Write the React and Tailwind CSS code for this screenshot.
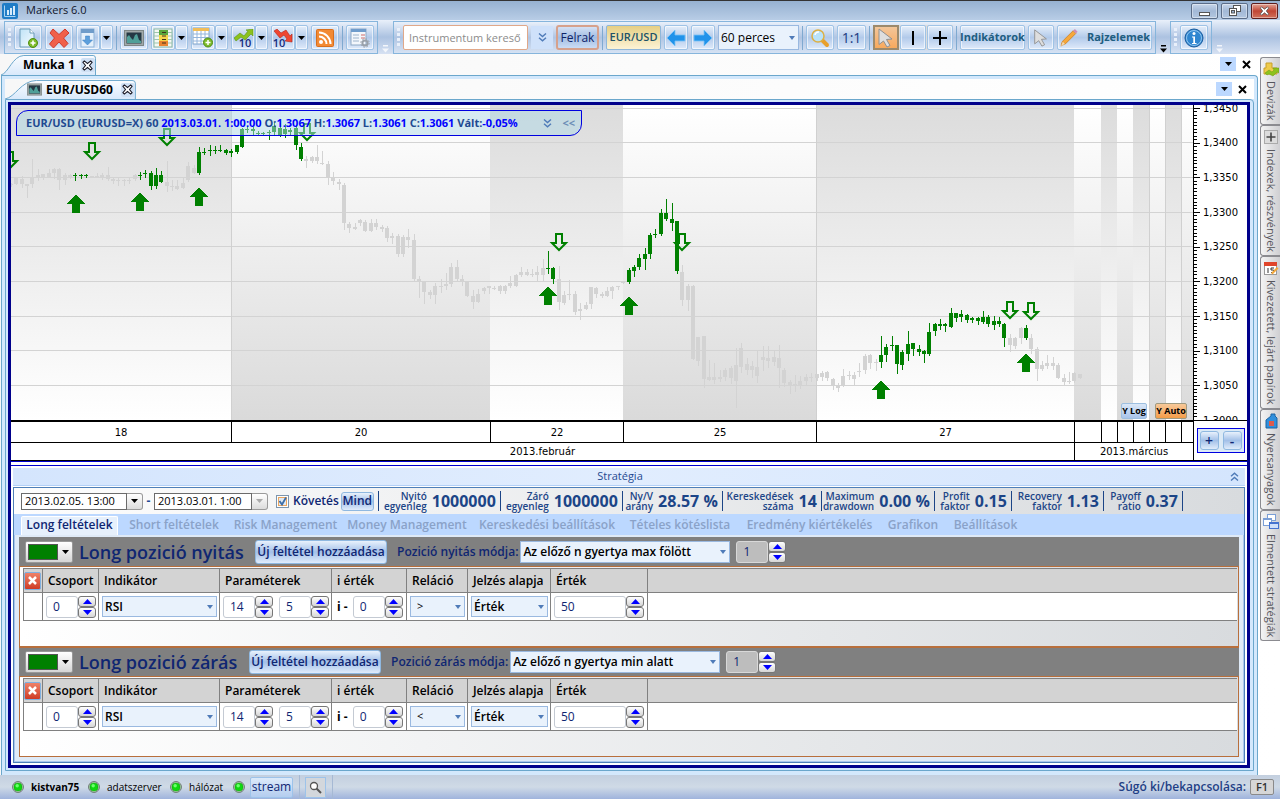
import React from "react";

/* ---------- chart data: [high, top, bottom, low] per hourly candle ---------- */
const CANDLES = [
  [183,184,185,186],[177,178,184,184],[176,179,184,187],[184,184,186,197],[159,178,184,187],[169,175,177,180],[174,174,177,179],[169,173,177,177],[168,169,173,178],[168,169,180,189],
  [173,175,180,184],[174,175,177,178],[173,175,176,180],[174,175,176,178],[174,175,176,177],[176,176,177,177],[173,176,177,177],[173,175,177,179],[167,175,179,180],[177,179,181,183],
  [177,180,181,185],[179,180,181,185],[178,180,181,183],[174,175,179,180],[172,175,176,179],[170,173,174,177],[171,173,186,189],[168,175,186,188],[171,175,182,182],[161,182,186,191],
  [180,186,187,190],[180,186,189,189],[178,183,188,188],[162,166,180,181],[165,168,173,173],[147,152,173,174],[148,152,153,154],[145,150,151,155],[146,150,151,153],[145,150,151,151],
  [149,150,153,154],[149,151,153,156],[145,145,152,153],[128,129,147,147],[126,129,130,132],[127,129,131,134],[131,133,134,135],[132,133,134,135],[130,132,133,139],[122,126,132,134],
  [123,128,135,136],[124,129,134,137],[128,130,132,134],[125,128,145,149],[143,147,159,160],[156,159,161,167],[156,157,161,162],[145,157,161,163],[151,163,164,164],[161,164,178,184],
  [172,178,181,184],[179,182,184,189],[183,185,223,229],[222,224,228,232],[223,227,229,229],[219,220,223,225],[220,222,231,231],[219,223,231,231],[219,223,227,229],[225,227,229,231],
  [226,228,238,241],[233,236,238,243],[234,236,254,256],[235,237,254,256],[229,237,240,247],[234,240,279,281],[276,279,282,297],[282,282,292,303],[290,292,295,298],[283,286,295,303],
  [279,286,287,292],[273,284,286,289],[263,267,284,286],[260,267,279,280],[275,279,282,285],[281,282,296,296],[290,296,302,308],[289,294,302,302],[287,288,291,293],[286,286,288,293],
  [286,288,289,289],[285,286,291,293],[285,286,291,293],[276,283,286,287],[274,275,286,286],[267,272,275,276],[269,272,275,275],[269,274,275,276],[266,272,275,281],[259,268,275,280],
  [251,268,269,273],[267,268,279,283],[266,279,302,309],[291,295,303,304],[280,294,295,299],[291,294,312,314],[303,309,311,319],[302,305,309,309],[287,287,304,308],[287,288,294,297],
  [292,294,296,297],[287,291,296,296],[286,287,291,298],[286,286,287,289],[281,282,283,283],[268,270,282,283],[265,267,271,276],[254,258,267,269],[248,254,259,269],[233,235,254,258],
  [229,234,235,237],[209,213,234,235],[199,213,219,220],[203,219,223,230],[221,221,271,273],[265,272,300,305],[284,286,300,310],[285,286,359,359],[337,337,361,365],[336,336,379,387],
  [360,377,380,380],[363,377,380,383],[370,377,379,381],[368,370,377,380],[366,368,378,383],[348,365,381,407],[343,348,367,372],[358,364,370,374],[361,366,370,377],[350,367,376,382],
  [346,357,360,370],[346,358,361,367],[350,357,362,365],[345,358,368,387],[368,370,383,386],[380,382,385,393],[375,384,386,391],[376,381,386,388],[374,377,381,385],[373,377,378,381],
  [374,374,378,380],[371,373,377,380],[371,372,378,380],[378,379,386,389],[383,386,388,391],[369,376,386,386],[371,375,376,379],[372,375,379,384],[363,371,372,376],[354,356,370,373],
  [354,355,363,368],[359,362,363,370],[336,355,362,367],[344,347,355,361],[336,345,346,350],[345,345,364,373],[350,352,365,369],[331,344,354,360],[343,343,349,355],[345,349,352,355],
  [350,351,354,362],[323,332,354,355],[323,324,331,335],[319,324,326,329],[323,324,326,331],[308,313,327,327],[313,313,318,321],[310,314,317,321],[314,315,320,322],[317,318,320,322],
  [317,318,321,324],[311,317,322,323],[315,317,324,326],[316,321,325,329],[317,321,324,326],[323,324,338,346],[334,338,345,351],[337,338,346,348],[327,328,338,343],[325,328,338,339],
  [334,338,349,353],[347,349,369,380],[361,365,369,370],[355,363,366,368],[357,363,366,369],[363,365,378,378],[374,378,382,384],[372,381,382,383],[372,373,381,382],[374,374,378,378],
];
const OPEN_RANGES = [[12,14],[24,28],[35,54],[100,101],[115,124],[162,185],[189,189]];
const inPosition = (i) => OPEN_RANGES.some(([a, b]) => i >= a && i <= b);
const ENTRIES = [[76,195],[140,193],[199,188],[548,287],[629,297],[881,381],[1026,354]];
const EXITS = [[10,151],[92,142],[167,128],[307,123],[559,233],[682,233],[1010,301],[1031,302]];
const BANDS = [[11,231,1],[231,490,0],[490,623,1],[623,816,0],[816,1074,1],[1074,1101,0],[1101,1117,1],[1117,1133,0],[1133,1149,1],[1149,1165,0],[1165,1181,1],[1181,1193,0]];
const PRICES = [["1,3450",108],["1,3400",142],["1,3350",177],["1,3300",212],["1,3250",246],["1,3200",281],["1,3150",316],["1,3100",350],["1,3050",385],["1,3000",420]];
const DAYS = ["18", "20", "22", "25", "27", "", "", "", "", "", "", ""];
const DAY_COLS = "grid-cols-[minmax(0,221fr)_minmax(0,259fr)_minmax(0,133fr)_minmax(0,193fr)_minmax(0,258fr)_minmax(0,27fr)_minmax(0,16fr)_minmax(0,16fr)_minmax(0,16fr)_minmax(0,16fr)_minmax(0,16fr)_minmax(0,11fr)]";

const UI = "font-['Open_Sans',sans-serif]";
const VERD = "font-['DejaVu_Sans',sans-serif]";
const GLASS = "bg-linear-to-b from-[#e6effa] via-[#b2caea] to-[#dfeafa]";

function Plot() {
  return (
    <svg className="block h-[315px] w-full" viewBox="11 105 1182 315" preserveAspectRatio="none" shapeRendering="crispEdges">
      <defs>
        <linearGradient id="down" x1="0" y1="0" x2="0" y2="1"><stop offset="0" stopColor="#dcdcdc" /><stop offset="1" stopColor="#ffffff" /></linearGradient>
        <linearGradient id="up" x1="0" y1="0" x2="0" y2="1"><stop offset="0" stopColor="#ffffff" /><stop offset="1" stopColor="#dadada" /></linearGradient>
      </defs>
      {BANDS.map(([a, b, d]) => <rect key={a} x={a} y="105" width={b - a} height="315" fill={d ? "url(#down)" : "url(#up)"} />)}
      {PRICES.slice(0, 9).map(([t, y]) => <rect key={t} x="11" y={y} width="1182" height="1" fill="#d3d3d3" />)}
      {[231, 816, 1149, 1165, 1181].map((x) => <rect key={x} x={x} y="105" width="1" height="315" fill="#d0d0d0" />)}
      {CANDLES.map(([hi, top, bot, lo], i) => {
        const x = Math.round(11 + 5.37 * i);
        return (
          <g key={i} fill={inPosition(i) ? "#008000" : "#d3d3d3"}>
            <rect x={x} y={hi} width="1" height={lo - hi + 1} />
            <rect x={x - 2} y={top} width="4" height={Math.max(1, bot - top)} />
          </g>
        );
      })}
      {ENTRIES.map(([x, y]) => <path key={x} fill="#008000" d={`M${x} ${y}l9 8v1h-5v9h-8v-9h-5v-1z`} />)}
      {EXITS.map(([x, y]) => <path key={x} shapeRendering="auto" fill="none" stroke="#008000" strokeWidth="2" d={`M${x - 3} ${y + 1}h6v9h4l-7 7l-7 -7h4z`} />)}
    </svg>
  );
}

function PriceAxis() {
  const ticks = Array.from({ length: 91 }, (_, i) => 108 + i * 3.465);
  return (
    <svg className="block h-[315px] w-[54px] shrink-0 bg-white" viewBox="1193 105 54 315">
      <rect x="1193" y="105" width="1" height="315" />
      <g shapeRendering="crispEdges">
        {ticks.map((y, i) => <rect key={i} x="1193" y={Math.round(y)} width={i % 10 ? 4 : 7} height="1" />)}
      </g>
      {PRICES.map(([t, y]) => <text key={t} x="1203" y={y + 4} fontSize="10" fontFamily="DejaVu Sans">{t}</text>)}
    </svg>
  );
}

/* ---------- toolbar ---------- */
const Drop = ({ c = "#000" }) => <svg width="7" height="4" viewBox="0 0 7 4"><path d="M0 0h7L3.5 4z" fill={c} /></svg>;
const Sep = () => <span className="h-6 w-px shrink-0 bg-[#7fa9d0]" />;
const Grip = () => (
  <svg width="3" height="20" viewBox="0 0 3 20" className="shrink-0"><path d="M1.5 0v20" stroke="#e9f0fa" strokeWidth="3" strokeDasharray="3 2" /></svg>
);
const ToolBtn = ({ label, w = "w-7", cls = "", children }) => (
  <button aria-label={label} className={`flex h-[25px] shrink-0 items-center justify-center rounded-[2px] border border-[#9fc3e6] shadow-[inset_0_0_0_1px_rgba(255,255,255,.6)] ${GLASS} ${w} ${cls}`}>{children}</button>
);
const Split = ({ label, children }) => (
  <span className="flex shrink-0">
    <ToolBtn label={label} w="w-6">{children}</ToolBtn>
    <ToolBtn label={`${label} menü`} w="w-[13px]"><Drop /></ToolBtn>
  </span>
);
const Bar = ({ children, cls = "" }) => (
  <div className={`flex h-[33px] shrink-0 items-center gap-[3px] border border-[#86b5dc] bg-linear-to-b from-[#e9f0fa] via-[#b0c5e3] to-[#d6e2f3] px-[3px] ${cls}`}><Grip />{children}</div>
);
const Overflow = ({ c = "#f3f6fb" }) => (
  <svg width="7" height="8" viewBox="0 0 7 8" className="mt-6 shrink-0"><path d="M1 0h5v1.5H1zM0 3.5h7L3.500 7.500z" fill={c} /></svg>
);

const PageNew = () => (
  <svg width="22" height="22" viewBox="0 0 22 22"><defs><linearGradient id="pg" x1="0" y1="0" x2="1" y2="1"><stop offset="0" stopColor="#bfe3f7" /><stop offset="1" stopColor="#f6fbff" /></linearGradient></defs>
    <path d="M3 2h10l4 4v14H3z" fill="url(#pg)" stroke="#6d9cb8" /><path d="M13 2v4h4" fill="#fff" stroke="#6d9cb8" /><circle cx="16" cy="16" r="4.500" fill="#7dbb2a" stroke="#4f8d13" /><path d="M16 13.500v5M13.500 16h5" stroke="#fff" strokeWidth="1.600" /></svg>
);
const RedX = () => (
  <svg width="22" height="22" viewBox="0 0 22 22"><path d="M5 2l6 5.500L17 2l4 4-5.500 5L20 16.500 16 20.500l-5-5.500-5.500 6L1.500 17 6.500 11 2 6z" fill="#f0604a" stroke="#cf3b2c" strokeWidth="1" /></svg>
);
const Download = () => (
  <svg width="18" height="20" viewBox="0 0 18 20"><rect x="2" y="1" width="13" height="18" fill="#e4f0fb" stroke="#8fb4d8" /><rect x="2" y="1" width="13" height="4" fill="#6f9cca" /><path d="M6.500 8h4v4h3l-5 5-5-5h3z" fill="#5b9fdc" stroke="#3a7dc0" strokeWidth=".5" /></svg>
);
const ChartIcon = ({ w = 20, h = 16 }) => (
  <svg width={w} height={h} viewBox="0 0 20 16"><rect x=".5" y=".5" width="19" height="15" fill="#a2aaaa" stroke="#7d8686" /><rect x="2.500" y="2.500" width="15" height="11" fill="#243844" /><path d="M3 13V7l2-2 2 3 2 2 2-5 2-1 2 6 2 1v2z" fill="#4f9f98" /></svg>
);
const LevelsIcon = () => (
  <svg width="20" height="20" viewBox="0 0 20 20"><rect x="1" y="1" width="18" height="18" fill="#f4f8f4" stroke="#8ab7a2" /><path d="M1 4.500h18M1 8h18M1 11.500h18M1 15h18" stroke="#9fc7ae" /><path d="M6 2h9v5H6z" fill="#58a63c" /><path d="M6 7h9v6H6z" fill="#f3d54a" /><path d="M6 13h9v5H6z" fill="#e98432" /><path d="M9 4.500h4M9 8h4M9 11.500h4M9 15h4" stroke="#40331a" /></svg>
);
const GridIcon = () => (
  <svg width="22" height="21" viewBox="0 0 22 21"><rect x="1" y="1" width="16" height="16" fill="#fff" stroke="#7da3cb" /><rect x="1" y="1" width="16" height="3" fill="#f1bd58" /><path d="M1 7h16M1 10.500h16M1 14h16M5 4v13M9 4v13M13 4v13" stroke="#94b5dc" /><circle cx="16" cy="15.500" r="4.500" fill="#7dbb2a" stroke="#4f8d13" /><path d="M16 13v5M13.500 15.500h5" stroke="#fff" strokeWidth="1.500" /></svg>
);
const TrendIcon = ({ up }) => (
  <span className="relative flex h-6 w-[22px] items-end justify-center pb-0.5">
    <svg className="absolute left-0.5 top-[3px]" width="20" height="14" viewBox="0 0 20 14">
      {up ? <path d="M0 9l6-5 4 3 4-5-2-1 7-1v7l-2-2-6 6-4-3-5 4z" fill="#8cc21d" stroke="#5d9312" strokeWidth=".6" /> : <path d="M0 2l3-2 4 4 5-3 4 6 2-2v8l-7-1 2-2-3-4-4 3z" fill="#ef4632" stroke="#b52317" strokeWidth=".6" />}
    </svg>
    <span className={`relative text-[11px] font-semibold leading-[11px] text-[#152a7c] ${up ? "pl-1" : "pr-2"}`}>10</span>
  </span>
);
const Rss = () => (
  <svg width="18" height="18" viewBox="0 0 18 18"><rect x=".5" y=".5" width="17" height="17" rx="1" fill="#f28a34" stroke="#d96f1c" /><circle cx="5" cy="13" r="2" fill="#fff" /><path d="M3 7.500a7.500 7.500 0 0 1 7.500 7.500M3 3.500A11.500 11.500 0 0 1 14.500 15" fill="none" stroke="#fff" strokeWidth="2" /></svg>
);
const SettingsDoc = () => (
  <svg width="20" height="20" viewBox="0 0 20 20"><rect x="1" y="1" width="15" height="16" fill="#f3f7fc" stroke="#8fa9c6" /><rect x="1" y="1" width="15" height="3" fill="#6f9ccc" /><path d="M3 7h6M3 10h6M3 13h6" stroke="#9eb4cc" /><path d="M11 7h4M11 10h4" stroke="#dc9a9a" strokeWidth="1.500" /><circle cx="15" cy="15" r="2.600" fill="none" stroke="#9aa1a9" strokeWidth="2" /><circle cx="15" cy="15" r="4.200" fill="none" stroke="#9aa1a9" strokeDasharray="1.600 1.700" /></svg>
);
const BlueArrow = ({ flip }) => (
  <svg width="20" height="18" viewBox="0 0 20 18" className={flip ? "rotate-180" : ""}><path d="M1 9l8-8v5h10v6H9v5z" fill="#2193ea" stroke="#7cc4f7" strokeWidth=".8" /></svg>
);
const Magnifier = () => (
  <svg width="20" height="20" viewBox="0 0 20 20"><path d="M12 12l5 5" stroke="#e8a02c" strokeWidth="4" strokeLinecap="round" /><circle cx="8" cy="8" r="6" fill="#b9e3fa" stroke="#ddb044" strokeWidth="1.500" /><path d="M5 7a3.500 3.500 0 0 1 4-3" stroke="#fff" strokeWidth="1.500" fill="none" /></svg>
);
const Cursor = ({ s = 20 }) => (
  <svg width={s} height={s} viewBox="0 0 20 20"><path d="M3 1l13 10-5.500 .5 3.500 6-3 1.500-3.500-6L3 16.500z" fill="#dedede" stroke="#909090" /></svg>
);
const Pencil = () => (
  <svg width="20" height="20" viewBox="0 0 22 22"><path d="M2.500 18l1.500-3.500L15.500 3l3 3L7 17.500z" fill="#f6a83b" stroke="#c8791d" strokeWidth=".8" /><path d="M15.500 3l2-2 3 3-2 2z" fill="#cf8fb5" /><path d="M2 20l2-5.500L7 17.500z" fill="#f5dcb4" stroke="#c8791d" strokeWidth=".4" /></svg>
);
const Info = () => (
  <svg width="20" height="20" viewBox="0 0 20 20"><circle cx="10" cy="10" r="9" fill="#2f86d0" stroke="#1c5d9e" /><circle cx="10" cy="10" r="7.500" fill="none" stroke="#a9d4f5" strokeWidth=".8" /><path d="M8 8.500h3V15h1.500v1H8v-1h1.300V9.500H8z" fill="#fff" /><circle cx="10" cy="5.500" r="1.500" fill="#fff" /></svg>
);
const Chevrons = ({ up }) => (
  <svg width="9" height="9" viewBox="0 0 9 9" className={up ? "rotate-180" : ""}><path d="M1 .5l3.500 3L8 .5M1 4.800l3.500 3L8 4.800" fill="none" stroke="#4f7bb8" strokeWidth="1.400" /></svg>
);
const CloseGlyph = () => (
  <svg width="11" height="11" viewBox="0 0 12 12"><path d="M2.500 1L6 3.800 9.500 1 11 2.500 8.200 6l2.800 3.500L9.500 11 6 8.200 2.500 11 1 9.500 3.800 6 1 2.500z" fill="#fff" stroke="#1a1a26" strokeWidth="1.200" /></svg>
);

function Toolbar() {
  return (
    <div className="flex h-[34px] items-start bg-linear-to-b from-[#e9f0fa] via-[#acc2e1] to-[#d6e1f2] pl-1 pt-px">
      <Bar>
        <ToolBtn label="Új"><PageNew /></ToolBtn>
        <ToolBtn label="Törlés"><RedX /></ToolBtn>
        <Split label="Mentés"><Download /></Split>
        <Sep />
        <ToolBtn label="Grafikon"><ChartIcon /></ToolBtn>
        <Split label="Szintek"><LevelsIcon /></Split>
        <Split label="Táblázat"><GridIcon /></Split>
        <Split label="Nyertesek"><TrendIcon up /></Split>
        <Split label="Vesztesek"><TrendIcon /></Split>
        <ToolBtn label="Hírek"><Rss /></ToolBtn>
        <Sep />
        <ToolBtn label="Beállítások"><SettingsDoc /></ToolBtn>
      </Bar>
      <span className="flex w-[15px] justify-center"><Overflow /></span>
      <Bar>
        <input aria-label="Instrumentum kereső" placeholder="Instrumentum kereső" className="h-[25px] w-[125px] rounded-[2px] border border-[#e0a889] bg-white px-[5px] text-[11px] placeholder:text-[#8c8c8c]" />
        <button aria-label="Lista" className="flex h-[23px] w-[22px] items-center justify-center bg-[#cfe1fa]"><Chevrons /></button>
        <button className="h-[25px] w-[43px] rounded-[3px] border-2 border-[#d6a18c] bg-linear-to-b from-[#d3e1f5] via-[#a3bde2] to-[#cadcf4] text-xs text-[#0e2469]">Felrak</button>
        <Sep />
        <button className="h-[25px] w-[55px] rounded-[2px] border border-[#8fb7da] bg-linear-to-b from-[#e6cf83] to-[#fcf3d5] text-[11px] font-semibold text-[#205267]">EUR/USD</button>
        <ToolBtn label="Vissza" w="w-6"><BlueArrow /></ToolBtn>
        <ToolBtn label="Előre" w="w-6"><BlueArrow flip /></ToolBtn>
        <Select label="Időtáv" value="60 perces" cls="h-[25px] w-[81px] text-xs" />
        <Sep />
        <ToolBtn label="Nagyítás"><Magnifier /></ToolBtn>
        <ToolBtn label="1:1 méret" w="w-[29px]" cls="text-sm text-[#1c3a80]">1:1</ToolBtn>
        <Sep />
        <span className="flex gap-px bg-[#dcdcdc]">
          <button aria-label="Kijelölés" className="flex h-[25px] w-[26px] items-center justify-center border-2 border-[#9c8a6d] bg-linear-to-b from-[#f3c69a] to-[#f8a95c]"><Cursor /></button>
          <ToolBtn label="Vonal" w="w-[26px]"><svg width="14" height="14"><path d="M7 0v14" stroke="#000" strokeWidth="2" /></svg></ToolBtn>
          <ToolBtn label="Szálkereszt" w="w-[26px]"><svg width="14" height="14"><path d="M7 0v14M0 7h14" stroke="#000" strokeWidth="2" /></svg></ToolBtn>
        </span>
        <Sep />
        <ToolBtn label="Indikátorok" w="w-[65px]" cls="text-[11px] font-bold text-[#205d80]">Indikátorok</ToolBtn>
        <ToolBtn label="Mutató" w="w-[26px]"><Cursor s={18} /></ToolBtn>
        <ToolBtn label="Rajzelemek" w="w-[95px]" cls="gap-2 text-[11px] font-bold text-[#205d80]"><Pencil />Rajzelemek</ToolBtn>
      </Bar>
      <span className="flex w-[14px] justify-center"><Overflow c="#000" /></span>
      <Bar><ToolBtn label="Információ"><Info /></ToolBtn></Bar>
      <span className="flex w-[14px] justify-center"><Overflow /></span>
    </div>
  );
}

const WinBtn = ({ label, tone, children }) => (
  <button aria-label={label} className={`flex h-4 w-[27px] items-center justify-center rounded-[2px] border shadow-[inset_0_0_0_1px_rgba(255,255,255,.4)] ${tone}`}>{children}</button>
);

function TitleBar() {
  const plain = "border-[#5b6d88] bg-linear-to-b from-[#c6d5e9] via-[#a3b9d6] to-[#b3c7e0]";
  return (
    <header className="flex h-5 items-center border-t border-[#333] bg-linear-to-b from-[#96b1d1] to-[#b8cde6] pl-0.5">
      <svg width="16" height="16" viewBox="0 0 16 16"><rect width="16" height="16" rx="2" fill="#1f7cc6" /><path d="M2.500 2.500v11h11" stroke="#a9d4f5" fill="none" /><path d="M5 7h2v5H5zM8 5h2v7H8zM11 3h2v9h-2z" fill="#d6ebfb" /></svg>
      <h1 className="ml-2 flex-1 text-[11px] text-[#10152a]">Markers 6.0</h1>
      <div className="flex items-center gap-[3px] pr-0.5">
        <WinBtn label="Kis méret" tone={plain}><svg width="11" height="12"><rect x=".5" y="7.500" width="10" height="3" fill="#fff" stroke="#555" /></svg></WinBtn>
        <WinBtn label="Visszaállítás" tone={plain}><svg width="12" height="11" viewBox="0 0 12 11"><rect x="4.500" y=".5" width="7" height="6" fill="#fff" stroke="#555" /><rect x=".5" y="3.500" width="7" height="7" fill="#fff" stroke="#555" /><rect x="2.500" y="5.500" width="3" height="2.500" fill="#9cb3d1" stroke="#555" /></svg></WinBtn>
        <WinBtn label="Bezárás" tone="border-[#5d1d1d] bg-linear-to-b from-[#e0a396] via-[#c04434] to-[#d0705c]"><svg width="11" height="10" viewBox="0 0 12 12"><path d="M2.500 1L6 3.800 9.500 1 11 2.500 8.200 6l2.800 3.500L9.500 11 6 8.200 2.500 11 1 9.500 3.800 6 1 2.500z" fill="#fff" stroke="#555" /></svg></WinBtn>
      </div>
    </header>
  );
}

/* ---------- form controls ---------- */
const Select = ({ label, value, cls, text = "pl-0.5" }) => (
  <span className={`relative inline-block shrink-0 ${cls}`}>
    <select aria-label={label} defaultValue={value} className={`size-full appearance-none border border-[#9ab9e0] bg-[#e9f2fc] text-black ${text}`}><option>{value}</option></select>
    <span className="pointer-events-none absolute inset-y-0 right-1 flex items-center"><svg width="6" height="4" viewBox="0 0 6 4"><path d="M0 0h6L3 4z" fill="#4f7bb8" /></svg></span>
  </span>
);
const Spin = ({ label, value, w, gray }) => (
  <span className="flex h-[22px] shrink-0 items-stretch font-normal">
    <input aria-label={label} defaultValue={value} className={`rounded-[3px] border pl-[6px] text-xs text-[#0f2672] ${gray ? "border-[#d8d8d8] bg-[#bdbdbd]" : "border-[#c4cad3] bg-white"} ${w}`} />
    <span className="flex w-[18px] flex-col">
      <button aria-label={`${label} növelés`} className="flex h-[11px] items-center justify-center rounded-[3px] border border-[#777] bg-linear-to-b from-white to-[#d5d5d5]"><svg width="9" height="5"><path d="M0 5L4.500 0 9 5z" fill="#0000ff" /></svg></button>
      <button aria-label={`${label} csökkentés`} className="flex h-[11px] items-center justify-center rounded-[3px] border border-[#777] bg-linear-to-b from-white to-[#d5d5d5]"><svg width="9" height="5"><path d="M0 0h9L4.500 5z" fill="#0000ff" /></svg></button>
    </span>
  </span>
);
const DateBox = ({ label, value, w, off }) => (
  <span className="flex h-[17px]">
    <input aria-label={label} defaultValue={value} className={`border border-[#6b6b6b] bg-white pl-[3px] text-[11px] text-black ${w}`} />
    <button aria-label={`${label} választó`} className="flex w-4 items-center justify-center rounded-r-[3px] border border-l-0 border-[#9a9a9a] bg-linear-to-b from-white to-[#dcdcdc]"><Drop c={off ? "#aaa" : "#000"} /></button>
  </span>
);
const TextBtn = ({ children, cls = "" }) => (
  <button className={`rounded-[3px] border border-[#8fb8e0] bg-linear-to-b from-[#e8f1fc] via-[#a3c0e8] to-[#e0ecfb] font-semibold text-[#0f2672] ${cls}`}>{children}</button>
);

/* ---------- strategy ---------- */
const STATS = [
  ["Nyitó", "egyenleg", "1000000", "w-[122px]"], ["Záró", "egyenleg", "1000000", "w-[122px]"], ["Ny/V", "arány", "28.57 %", "w-[100px]"], ["Kereskedések", "száma", "14", "w-[99px]"],
  ["Maximum", "drawdown", "0.00 %", "w-[113px]"], ["Profit", "faktor", "0.15", "w-[77px]"], ["Recovery", "faktor", "1.13", "w-[92px]"], ["Payoff", "ratio", "0.37", "w-[79px]"],
];
const TABS = [["Long feltételek", "w-[97px]"], ["Short feltételek", "w-[112px]"], ["Risk Management", "w-[111px]"], ["Money Management", "w-[132px]"], ["Kereskedési beállítások", "w-[148px]"], ["Tételes kötéslista", "w-[118px]"], ["Eredmény kiértékelés", "w-[141px]"], ["Grafikon", "w-[66px]"], ["Beállítások", "w-[79px]"]];

function Group({ title, modeLabel, mode, rel, gap }) {
  const td = "border border-[#808080]";
  const th = `${td} pl-[5px] text-left text-xs font-semibold whitespace-nowrap`;
  return (
    <section className="border-t border-[#b86f3c] bg-[#808080] first:border-[#808080]">
      <div className="flex h-7 items-center pl-[6px]">
        <button aria-label="Szín" className="flex h-[22px] w-[48px] items-center gap-1 rounded-[2px] border border-[#999] bg-linear-to-b from-white to-[#d5d5d5] pl-[2px]"><span className="h-4 w-[30px] border border-[#555] bg-[#008000]" /><Drop /></button>
        <h2 className={`ml-1.5 shrink-0 text-[18px] font-semibold leading-7 text-[#0f2672] ${gap}`}>{title}</h2>
        <TextBtn cls="h-6 w-[132px] whitespace-nowrap text-xs">Új feltétel hozzáadása</TextBtn>
        <span className="ml-2.5 whitespace-nowrap text-xs font-semibold text-[#0f2672]">{modeLabel}</span>
        <Select label={modeLabel} value={mode} cls="ml-0.5 h-[22px] w-[210px] text-xs" text="pl-0.5 font-semibold" />
        <span className="ml-1.5"><Spin label="Gyertyák száma" value="1" w="w-8" gray /></span>
      </div>
      <div className="h-[81px] border border-[#b86f3c] bg-linear-to-r from-white to-[#d8dbde] pl-[3px] pr-px pt-px">
        <table className="w-full table-fixed border-collapse bg-white">
          <colgroup><col className="w-[19px]" /><col className="w-[56px]" /><col className="w-[121px]" /><col className="w-[112px]" /><col className="w-[75px]" /><col className="w-[61px]" /><col className="w-[83px]" /><col className="w-[97px]" /><col /></colgroup>
          <thead><tr className="h-6 bg-[#d3d3d3]">
            <th className="border border-[#808080] p-0"><button aria-label="Összes törlése" className="flex h-[18px] w-[17px] items-center justify-center rounded-[2px] border border-[#7fb0e0] bg-linear-to-b from-[#ee8168] to-[#cf3a24]"><svg width="9" height="9"><path d="M1 1l7 7M8 1L1 8" stroke="#fff" strokeWidth="2.500" /></svg></button></th>
            <th className={th}>Csoport</th><th className={th}>Indikátor</th><th className={th}>Paraméterek</th><th className={th}>i érték</th><th className={th}>Reláció</th><th className={th}>Jelzés alapja</th><th className={th}>Érték</th><th className={`${th} border-r-0`}></th>
          </tr></thead>
          <tbody><tr className="h-7">
            <td className={td}></td>
            <td className={td}><span className="flex pl-[3px]"><Spin label="Csoport" value="0" w="w-8" /></span></td>
            <td className={td}><span className="flex pl-[3px]"><Select label="Indikátor" value="RSI" cls="h-[21px] w-[115px] text-xs" text="pl-0.5 font-semibold" /></span></td>
            <td className={td}><span className="flex gap-[6px] pl-[3px]"><Spin label="Első paraméter" value="14" w="w-8" /><Spin label="Második paraméter" value="5" w="w-8" /></span></td>
            <td className={td}><span className="flex items-center gap-[5px] pl-[5px] text-xs font-bold">i -<Spin label="i érték" value="0" w="w-8" /></span></td>
            <td className={td}><span className="flex pl-[3px]"><Select label="Reláció" value={rel} cls="h-[21px] w-[55px] text-[11px]" text="pl-[6px]" /></span></td>
            <td className={td}><span className="flex pl-[3px]"><Select label="Jelzés alapja" value="Érték" cls="h-[21px] w-[77px] text-xs" text="pl-0.5 font-semibold" /></span></td>
            <td className={td}><span className="flex pl-[3px]"><Spin label="Érték" value="50" w="w-[72px]" /></span></td>
            <td className={`${td} border-r-0`}></td>
          </tr></tbody>
        </table>
      </div>
    </section>
  );
}

function Strategy() {
  return (
    <section className="flex flex-1 flex-col bg-white px-0.5 pb-0.5">
      <div className="-mx-0.5 mb-0.5 h-[5px] border-y border-[#0000ce]" />
      <div className="relative flex h-[18px] items-center justify-center border-b border-[#b2d0f8] bg-linear-to-r from-[#d4e5fd] via-[#e1edfe] to-[#d4e5fd] pr-[18px] text-[11px] text-[#1f4a91]">
        Stratégia
        <button aria-label="Összecsukás" className="absolute right-1.5"><Chevrons up /></button>
      </div>
      <div className="mt-px flex flex-1 flex-col border border-[#4e7fb8] bg-linear-to-r from-[#fdfdfd] to-[#d8dbde]">
        <div className="flex h-[26px] items-center pl-[7px]">
          <DateBox label="Kezdet" value="2013.02.05. 13:00" w="w-[106px]" />
          <span className="w-[11px] text-center text-xs font-bold text-[#1f4a91]">-</span>
          <DateBox label="Vég" value="2013.03.01. 1:00" w="w-[98px]" off />
          <label className="ml-2 flex items-center gap-1 text-xs font-semibold text-[#0f2672]">
            <input type="checkbox" defaultChecked className="peer sr-only" />
            <svg width="13" height="13" viewBox="0 0 13 13"><rect x=".5" y=".5" width="12" height="12" fill="#fff" stroke="#7d95ad" /><rect x="2.500" y="2.500" width="8" height="8" fill="#dfe9f3" stroke="#eba55e" /><path d="M3.500 6l2.500 3.500L10 2.500" fill="none" stroke="#3e6ea8" strokeWidth="1.800" /></svg>
            Követés
          </label>
          <TextBtn cls="ml-0.5 h-[19px] w-[33px] text-xs">Mind</TextBtn>
          <span className="ml-1 h-5 w-px bg-[#1c4587]" />
          {STATS.map(([a, b, v, w]) => (
            <div key={a} className={`flex h-5 shrink-0 items-center justify-end gap-[5px] whitespace-nowrap border-r border-[#1c4587] pr-1 text-[#1c4587] ${w}`}>
              <span className="flex flex-col text-right text-[10px] font-semibold leading-[10px]"><span>{a}</span><span>{b}</span></span>
              <span className="text-base font-bold leading-5">{v}</span>
            </div>
          ))}
        </div>
        <nav className="flex h-[21px] items-end bg-[#bcd8ff] pl-[7px]">
          {TABS.map(([t, w], i) => (
            <button key={t} className={`h-[19px] shrink-0 whitespace-nowrap pb-0.5 text-center text-xs font-semibold leading-4 ${w} ${i === 0 ? "rounded-t-[2px] border border-b-0 border-white bg-[#e6f0fc] text-[#0f2672]" : "text-[#8aa2c8]"}`}>{t}</button>
          ))}
        </nav>
        <div className="flex-1 border-x border-b border-[#a9c6ec] bg-[#dfeaf7] px-1 pb-[3px] pt-[2px]">
          <Group title="Long pozició nyitás" modeLabel="Pozició nyitás módja:" mode="Az előző n gyertya max fölött" rel=">" gap="w-[176px]" />
          <Group title="Long pozició zárás" modeLabel="Pozició zárás módja:" mode="Az előző n gyertya min alatt" rel="<" gap="w-[170px]" />
        </div>
      </div>
    </section>
  );
}

function ChartPanel() {
  return (
    <section className="shrink-0 border-b border-black bg-white">
      <div className="flex">
        <div className="relative min-w-0 flex-1">
          <Plot />
          <div className="absolute left-[5px] top-[5px] flex h-[26px] w-[566px] items-center rounded-tl-xl rounded-br-xl border border-[#0000e0] bg-[#add8e6]/50 pl-[9px]">
            <p className="whitespace-nowrap text-[11px] font-bold text-[#0000ff]">
              <span className="text-[#1f4a91]">EUR/USD (EURUSD=X) 60</span> 2013.03.01. 1:00:00 <span className="text-[#1f4a91]">O:</span>1.3067 <span className="text-[#1f4a91]">H:</span>1.3067 <span className="text-[#1f4a91]">L:</span>1.3061 <span className="text-[#1f4a91]">C:</span>1.3061 <span className="text-[#1f4a91]">Vált:</span>-0,05%
            </p>
            <button aria-label="Részletek" className="ml-auto"><Chevrons /></button>
            <button aria-label="Bezár" className="ml-2.5 mr-1.5 text-[11px] font-bold text-[#6a8cb5]">&lt;&lt;</button>
          </div>
          <div className="absolute bottom-px right-[6px] flex gap-2 text-[9px] font-bold leading-[14px] text-black">
            <button className="h-4 w-[26px] whitespace-nowrap rounded-[2px] border border-[#9dbfe0] bg-linear-to-b from-[#dbe8f8] to-[#a8c4ea]">Y Log</button>
            <button className="h-4 w-8 whitespace-nowrap rounded-[2px] border border-[#a09a80] bg-linear-to-b from-[#f7c999] to-[#f49c46]">Y Auto</button>
          </div>
        </div>
        <PriceAxis />
      </div>
      <div className="flex border-t border-black">
        <div className={`min-w-0 flex-1 border-r border-t border-black text-[10px] text-black ${VERD}`}>
          <div className={`grid h-[21px] border-b border-black ${DAY_COLS}`}>
            {DAYS.map((t, i) => <span key={i} className="flex items-center justify-center border-r border-black last:border-r-0">{t}</span>)}
          </div>
          <div className="grid h-[17px] grid-cols-[minmax(0,1064fr)_minmax(0,118fr)]">
            <span className="flex items-center justify-center border-r border-black">2013.február</span>
            <span className="flex items-center justify-center">2013.március</span>
          </div>
        </div>
        <div className="flex w-[53px] items-center justify-center">
          <div className="flex h-[25px] w-12 items-center justify-center gap-1 border border-[#0000e0] bg-[#dceaf6]">
            <TextBtn cls="flex h-[19px] w-[19px] items-center justify-center text-sm">+</TextBtn>
            <TextBtn cls="flex h-[19px] w-[19px] items-center justify-center text-sm">-</TextBtn>
          </div>
        </div>
      </div>
    </section>
  );
}

const TabShape = () => (
  <svg className="absolute inset-0 size-full" viewBox="0 0 100 21" preserveAspectRatio="none">
    <defs><linearGradient id="tab" x1="0" y1="0" x2="0" y2="1"><stop offset="0" stopColor="#fafcff" /><stop offset="1" stopColor="#d9e9fb" /></linearGradient></defs>
    <path d="M0 21C8 19 12 1 24 .5H97q2.500 0 2.500 3V21" fill="url(#tab)" stroke="#6ba7cc" vectorEffect="non-scaling-stroke" />
  </svg>
);
const StripEnd = () => (
  <span className="ml-auto flex items-center gap-1.5 self-start pt-[3px]">
    <button aria-label="Lista" className="flex h-[14px] w-4 items-center justify-center bg-[#bcd8ff]"><Drop /></button>
    <button aria-label="Bezárás"><svg width="9" height="9" viewBox="0 0 9 9"><path d="M1 1l7 7M8 1L1 8" stroke="#000" strokeWidth="2" /></svg></button>
  </span>
);

/* ---------- side tabs ---------- */
const SIDE = [
  ["Devizák", "h-[68px]", <svg width="16" height="16" viewBox="0 0 16 16"><path d="M3 2h6v5h5v6H1V7h2z" fill="#efcb4b" stroke="#c79f2c" /><path d="M2 12l4-3 3 2 2-2-1-2h6v5l-2-1-4 4-4-2-2 1z" fill="#8cc21d" stroke="#679b10" strokeWidth=".5" /></svg>],
  ["Indexek, részvények", "h-[131px]", <svg width="14" height="14" viewBox="0 0 14 14"><rect x=".5" y=".5" width="13" height="13" fill="#dcdcdc" stroke="#aaa" /><path d="M7 2.500v9M2.500 7h9" stroke="#444" strokeWidth="1.600" /></svg>],
  ["Kivezetett, lejárt papírok", "h-[153px]", <svg width="16" height="16" viewBox="0 0 16 16"><rect x="1.500" y="2.500" width="12" height="12" fill="#fff" stroke="#999" /><rect x="1" y="2" width="13" height="4" fill="#e0452b" /><path d="M5 8v5M8 8h3M8 8v2h2.500v2.500H8" stroke="#333" fill="none" /><path d="M8 13l6-6 1.500 1.500-6 6z" fill="#f3a83c" /></svg>],
  ["Nyersanyagok", "h-[101px]", <svg width="14" height="16" viewBox="0 0 14 16"><path d="M7 1h4v2l2 2v10H2V7l5-4z" fill="#2f8fdc" stroke="#1c65a3" /><rect x="5" y="8" width="5" height="5" fill="#dc5b4d" /></svg>],
  ["Elmentett stratégiák", "h-[131px]", <svg width="16" height="16" viewBox="0 0 16 16"><rect x="4.500" y=".5" width="8" height="6" fill="#fff" stroke="#7b9fd6" /><rect x=".5" y="4.500" width="8" height="7" fill="#fff" stroke="#7b9fd6" /><path d="M0 5h9" stroke="#7b9fd6" strokeWidth="2" /><rect x="6.500" y="8.500" width="9" height="6" fill="#cfe0fb" stroke="#4472d0" /><path d="M6 9h10" stroke="#4472d0" strokeWidth="2" /></svg>],
];

const Led = () => (
  <svg width="12" height="12" viewBox="0 0 12 12" className="shrink-0"><circle cx="6" cy="6" r="5.400" fill="#e9efe9" stroke="#56655a" strokeWidth=".9" /><circle cx="6" cy="6" r="4.100" fill="#0fd80f" stroke="#0a8a0a" strokeWidth=".6" /><circle cx="5.200" cy="4.800" r="1.700" fill="#6dff6d" /></svg>
);

export default function App() {
  return (
    <div className={`flex min-h-screen flex-col bg-white ${UI}`}>
      <TitleBar />
      <Toolbar />
      <main className="flex flex-1 bg-linear-to-r from-[#f7f7f7] to-white">
        <div className="ml-px flex min-w-0 flex-1 flex-col">
          <div className="flex h-[21px] pr-[7px]">
            <button className="relative mt-px flex w-[95px] items-center text-xs font-bold text-black"><TabShape /><span className="relative flex items-center whitespace-nowrap pl-[22px]">Munka 1<span className="ml-1.5 flex size-[14px] items-center justify-center rounded-[2px] bg-[#cfe0f4]"><CloseGlyph /></span></span></button>
            <StripEnd />
          </div>
          <div className="flex flex-1 flex-col rounded-tr-[4px] border-x border-t border-[#6ba7cc] bg-[#d3e8fc] p-[3px] pb-1">
            <div className="flex h-5 bg-linear-to-r from-[#f7f7f7] to-white pr-[7px]">
              <button className="relative mt-px flex w-[131px] items-center text-xs font-bold text-black"><TabShape /><span className="relative flex items-center gap-1 whitespace-nowrap pl-[22px]"><ChartIcon w={15} h={13} />EUR/USD60<span className="ml-1 flex size-[14px] items-center justify-center rounded-[2px] bg-[#cfe0f4]"><CloseGlyph /></span></span></button>
              <StripEnd />
            </div>
            <div className="flex flex-1 flex-col rounded-tr-[4px] border border-[#6ba7cc] bg-[#d3e8fc] py-[2px] pl-[2px] pr-[3px]">
              <div className="flex flex-1 flex-col border-[3px] border-[#00008b]">
                <ChartPanel />
                <Strategy />
              </div>
            </div>
          </div>
        </div>
        <aside className="ml-0.5 flex w-5 flex-col pt-[3px]">
          {SIDE.map(([t, h, icon]) => (
            <button key={t} className={`flex w-5 shrink-0 flex-col items-center gap-1 rounded-l-[3px] border border-r-0 border-[#8b8b90] bg-linear-to-r from-[#f4f4f4] to-[#cfcfd2] pt-[3px] text-[11px] text-[#55555c] ${h}`}>
              <span className="flex h-4 items-center">{icon}</span>
              <span className="whitespace-nowrap leading-4 [writing-mode:vertical-rl]">{t}</span>
            </button>
          ))}
        </aside>
      </main>
      <footer className="mb-px flex h-6 items-center bg-linear-to-b from-[#c3cfdf] via-[#cfdae6] to-[#9fb3dc] pl-3 text-[10px] text-black">
        <Led /><span className="ml-[7px] w-[57px] font-bold">kistvan75</span>
        <Led /><span className="ml-[7px] w-[63px]">adatszerver</span>
        <Led /><span className="ml-[7px] w-[44px]">hálózat</span>
        <Led /><button className="ml-[5px] h-[21px] w-[43px] rounded-[2px] border border-[#9dc3ea] bg-linear-to-b from-[#dceafa] to-[#b4cdef] text-xs text-[#0f2672]">stream</button>
        <span className="ml-1.5 h-6 w-px bg-[#a6b9d4]" />
        <button aria-label="Keresés" className="ml-[5px] flex h-[21px] w-[21px] items-center justify-center border border-[#9dc3ea] bg-[#d3d7dc]"><svg width="13" height="13" viewBox="0 0 13 13"><circle cx="5" cy="5" r="3.500" fill="#fff" stroke="#555" strokeWidth="1.300" /><path d="M7.500 7.500L12 12" stroke="#555" strokeWidth="2" /></svg></button>
        <span className="ml-1.5 h-6 w-px bg-[#a6b9d4]" />
        <span className="ml-auto text-xs font-semibold text-[#1f3f85]">Súgó ki/bekapcsolása:</span>
        <button className="ml-1 mr-1.5 h-4 w-6 rounded-[2px] border border-[#8a8a8a] bg-[#d6d6d6] text-[11px] font-semibold leading-3 text-[#333]">F1</button>
      </footer>
    </div>
  );
}
